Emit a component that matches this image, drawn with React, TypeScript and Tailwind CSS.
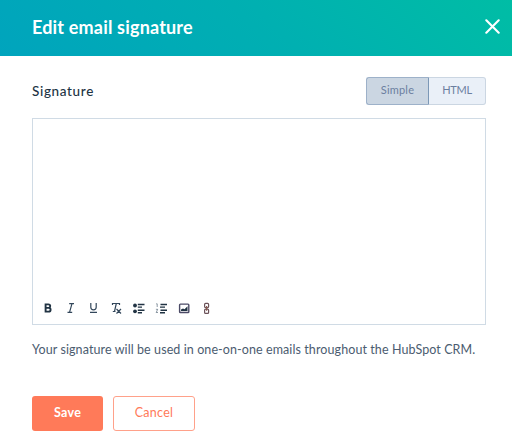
import React from "react";

function ToolbarIcon({ children }: { children: React.ReactNode }) {
  return (
    <button type="button" className="h-4 w-4 shrink-0">
      <svg width="16" height="16" viewBox="0 0 16 16" fill="none" stroke="#33475b" strokeWidth="1.2">
        {children}
      </svg>
    </button>
  );
}

function Toolbar() {
  return (
    <div className="flex gap-[6.75px] pb-2 pl-[7px]">
      <ToolbarIcon>
        <path d="M5.6 4.4V11.6H8.5Q10.6 11.6 10.6 9.7Q10.6 8 8.8 7.9Q10.2 7.6 10.2 6Q10.2 4.4 8.3 4.4ZM6 7.9H9" stroke="#213343" strokeWidth="1.9" />
      </ToolbarIcon>
      <ToolbarIcon>
        <path d="M6.2 3.7H11M4.5 12.3H9.2M9 3.7L6.5 12.3" />
      </ToolbarIcon>
      <ToolbarIcon>
        <path d="M4.8 3V7.3Q4.8 9.8 7.5 9.8T10.2 7.3V3M4 12.4H11" />
      </ToolbarIcon>
      <ToolbarIcon>
        <path d="M4.5 5V3.5H11.5V5M8.3 3.5L6.5 11.5M4.8 11.5H7.5M8.5 9L13 13.5M13 9L8.5 13.5" />
      </ToolbarIcon>
      <ToolbarIcon>
        <circle cx="4" cy="5.5" r="1.9" fill="#213343" stroke="none" />
        <circle cx="4" cy="11.3" r="1.9" fill="#213343" stroke="none" />
        <path d="M6.8 4.5H13.5M6.8 7.1H11M6.8 10.2H13.5M6.8 12.7H11" stroke="#213343" strokeWidth="1.4" />
      </ToolbarIcon>
      <ToolbarIcon>
        <path d="M2.2 3.8H3.2V7M1.9 9.3H3.7L2.2 12.5H4" strokeWidth="0.8" opacity="0.7" />
        <path d="M6.5 4.5H13M6 7.1H11M6.5 10.2H13M6 12.7H11" stroke="#213343" strokeWidth="1.4" />
      </ToolbarIcon>
      <ToolbarIcon>
        <rect x="2.6" y="4.1" width="9.2" height="8.4" rx="0.8" stroke="#4b4a66" strokeWidth="1.4" />
        <path d="M4 11V9.5L6 8.6L7.5 9.3L10.5 6.2V11Z" fill="#213343" stroke="none" />
      </ToolbarIcon>
      <ToolbarIcon>
        <rect x="5.6" y="3.4" width="4" height="4.2" rx="1" stroke="#6b5259" />
        <rect x="5.6" y="9.2" width="4" height="4.2" rx="1" stroke="#6b5259" />
        <path d="M7.6 6V10.8" stroke="#8a5a50" />
      </ToolbarIcon>
    </div>
  );
}

export default function App() {
  return (
    <div className="flex h-[442px] w-[512px] flex-col overflow-hidden bg-white font-['Lato',sans-serif] text-[#33475b]">
      <header className="flex h-[55.5px] shrink-0 items-center justify-between bg-[linear-gradient(45deg,#00a4bd,#00afb2_50%,#00bda5)] pr-[12px] pl-8">
        <h1 className="pb-[1.5px] text-[18px] leading-6 font-bold tracking-[0.18px] whitespace-nowrap text-white">Edit email signature</h1>
        <button type="button" aria-label="Close" className="mb-0.5">
          <svg width="15" height="15" viewBox="0 0 15 15" stroke="white" strokeWidth="2.1" strokeLinecap="round">
            <path d="M1.3 1.3L13.7 13.7M13.7 1.3L1.3 13.7" />
          </svg>
        </button>
      </header>
      <main className="flex flex-col pt-[21px] pr-[26px] pl-8">
        <div className="flex h-7 items-center justify-between">
          <label className="pt-px text-[13.5px] font-medium tracking-[0.65px] text-[#213343]">Signature</label>
          <div className="flex h-7 w-[120px] text-[11px] text-[#6b7fa0]">
            <button type="button" className="w-[63px] rounded-l-[3px] border border-[#9db1c9] border-r-[#7c98b6] bg-[#cbd6e2] tracking-[0.2px]">Simple</button>
            <button type="button" className="flex-1 rounded-r-[3px] border border-l-0 border-[#cbd6e2] bg-[#eaf0f8] tracking-[-0.3px]">HTML</button>
          </div>
        </div>
        <div className="mt-[13.5px] flex h-[207px] flex-col justify-end border border-[#d0dbe5]">
          <Toolbar />
        </div>
        <p className="mt-[15.5px] text-[12.5px] leading-[18px] tracking-[0.09px] whitespace-nowrap text-[#4b5c70]">
          Your signature will be used in one-on-one emails throughout the HubSpot CRM.
        </p>
        <div className="mt-[37px] flex gap-[10px] text-[12.5px] tracking-[0.3px]">
          <button type="button" className="h-[35px] w-[71px] rounded-[3px] bg-[#ff7a59] font-bold text-white">Save</button>
          <button type="button" className="h-[35px] w-[82px] rounded-[3px] border border-[#ffa18a] text-[#ff7a59]">Cancel</button>
        </div>
      </main>
    </div>
  );
}
